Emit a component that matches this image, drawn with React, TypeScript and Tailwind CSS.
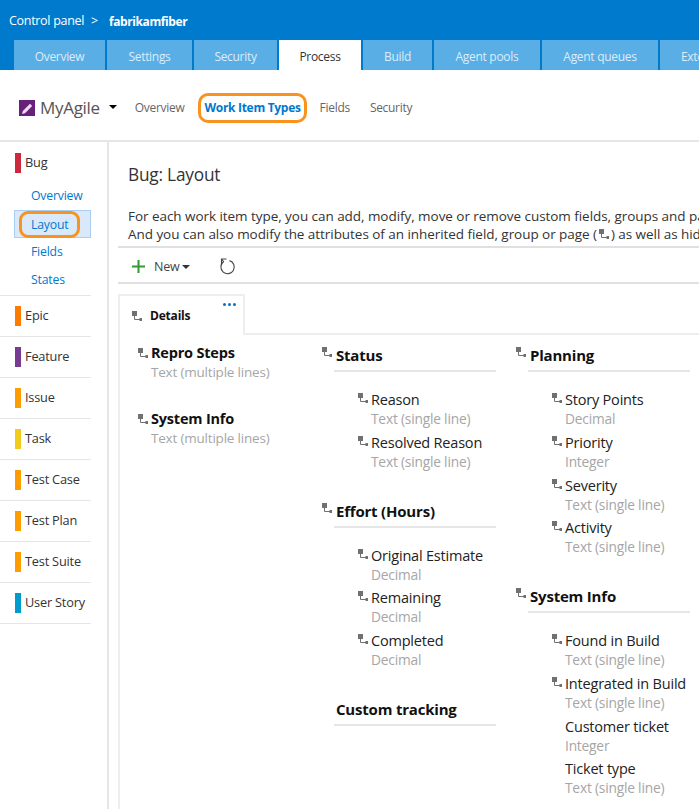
import React from 'react';

const topTabs = [
  { label: 'Overview', w: 'w-[91px]' },
  { label: 'Settings', w: 'w-[85px]' },
  { label: 'Security', w: 'w-[83px]' },
  { label: 'Process', w: 'w-[82px]', active: true },
  { label: 'Build', w: 'w-[69px]' },
  { label: 'Agent pools', w: 'w-[106px]' },
  { label: 'Agent queues', w: 'w-[116px]' },
];

const workItems = [
  { name: 'Epic', color: 'bg-[#ff7b00]' },
  { name: 'Feature', color: 'bg-[#773b93]' },
  { name: 'Issue', color: 'bg-[#ff9d00]' },
  { name: 'Task', color: 'bg-[#f2cb1d]' },
  { name: 'Test Case', color: 'bg-[#ff9d00]' },
  { name: 'Test Plan', color: 'bg-[#ff9d00]' },
  { name: 'Test Suite', color: 'bg-[#ff9d00]' },
  { name: 'User Story', color: 'bg-[#009ccc]' },
];

const InheritIcon = ({ className = '' }: { className?: string }) => (
  <svg width="10" height="10" viewBox="0 0 10 10" className={`shrink-0 ${className}`}>
    <rect x="0" y="0" width="5" height="5" fill="#707070" />
    <path d="M2.5 5v3.5H8" stroke="#707070" strokeWidth="1" fill="none" />
    <rect x="7.5" y="7" width="2.5" height="3" fill="#707070" />
  </svg>
);

const Field = ({ name, type, inherited = true }: { name: string; type: string; inherited?: boolean }) => (
  <div className="h-[42.75px] pl-[50px]">
    <div className="relative h-[20px] text-[14.5px] leading-[20px] text-[#222]">
      {inherited && <InheritIcon className="absolute left-[-13px] top-[3px]" />}
      {name}
    </div>
    <div className="mt-[-1px] text-[13.75px] leading-[20px] text-[#a6a6a6]">{type}</div>
  </div>
);

const Group = ({ title, inherited = true, children }: { title: string; inherited?: boolean; children?: React.ReactNode }) => (
  <div>
    <div className="relative ml-[13px] h-[28px] w-[162px] border-b-2 border-[#e6e6e6] pl-[2px] text-[15px] font-bold leading-[22px] text-[#111]">
      {inherited && <InheritIcon className="absolute left-[-12px] top-[3px]" />}
      {title}
    </div>
    {children && <div className="pt-[18px]">{children}</div>}
  </div>
);

export default function App() {
  return (
    <div className="h-[809px] w-[699px] overflow-hidden bg-white font-['Open_Sans','Noto_Sans',sans-serif] tracking-[-0.2px]">
      {/* top bar */}
      <div className="h-[70px] bg-[#007acc]">
        <div className="flex h-[40px] items-center pl-[9px] pt-[3px] text-[12.5px] tracking-[-0.3px] text-white">
          <span>Control panel</span>
          <span className="ml-[7px]">&gt;</span>
          <span className="ml-[11px] text-[12px] font-bold tracking-[-0.4px]">fabrikamfiber</span>
        </div>
        <div className="flex h-[30px] gap-[2px] pl-[14px]">
          {topTabs.map((t) => (
            <div
              key={t.label}
              className={`flex shrink-0 items-center justify-center pt-[4px] text-[12px] tracking-[-0.3px] ${t.w} ${
                t.active ? 'bg-white text-[#333]' : 'bg-[#59aee6] text-[#dcecf8]'
              }`}
            >
              {t.label}
            </div>
          ))}
          <div className="flex w-[60px] shrink-0 items-center bg-[#59aee6] pl-[21px] pt-[4px] text-[12px] tracking-[-0.3px] text-[#dcecf8]">Extensions</div>
        </div>
      </div>

      {/* process header */}
      <div className="flex h-[72px] items-center border-b-2 border-[#e6e6e6] pt-[6px] pl-[19px] text-[12px] tracking-[-0.3px]">
        <div className="flex h-[16px] w-[16px] items-center justify-center bg-[#68217a]">
          <svg width="13" height="13" viewBox="0 0 13 13">
            <path d="M1 12l.8-3L9 1.8l2.2 2.2L4 11.2z" fill="#eadff0" />
          </svg>
        </div>
        <span className="ml-[5px] text-[17px] text-[#555]">MyAgile</span>
        <span className="ml-[9px] mt-[-3px] h-0 w-0 border-x-[4px] border-t-[4px] border-x-transparent border-t-black" />
        <span className="ml-[18px] text-[#666]">Overview</span>
        <span className="ml-[14px] rounded-[10px] border-[3px] border-[#f7931e] px-[3px] py-[2px] font-bold leading-[20px] text-[#0078d0]">
          Work Item Types
        </span>
        <span className="ml-[13px] text-[#666]">Fields</span>
        <span className="ml-[20px] text-[#666]">Security</span>
      </div>

      <div className="flex">
        {/* left nav */}
        <div className="h-[668px] w-[109px] shrink-0 border-r-2 border-[#e6e6e6] pr-[16px]">
          <div className="border-b border-[#e6e6e6] pb-[1px] pl-[15px] pt-[11px]">
            <div className="flex h-[20px] items-center">
              <span className="h-[20px] w-[6px] bg-[#cc293d]" />
              <span className="ml-[4px] text-[12.75px] text-[#333]">Bug</span>
            </div>
            <div className="ml-[-1px] mt-[9px] flex flex-col text-[12.25px] text-[#0078d0]">
              <div className="flex h-[28px] items-center pl-[17px]">Overview</div>
              <div className="flex h-[28px] items-center border border-[#a8d0f5] bg-[#d9e9fa] pl-[4px]">
                <span className="rounded-[9px] border-[3px] border-[#f7931e] px-[9px] leading-[21px]">Layout</span>
              </div>
              <div className="flex h-[28px] items-center pl-[17px]">Fields</div>
              <div className="flex h-[28px] items-center pl-[17px]">States</div>
            </div>
          </div>
          {workItems.map((w) => (
            <div key={w.name} className="flex h-[41px] items-center border-b border-[#e6e6e6] pl-[15px]">
              <span className={`h-[20px] w-[6px] ${w.color}`} />
              <span className="ml-[4px] text-[12.75px] text-[#333]">{w.name}</span>
            </div>
          ))}
        </div>

        {/* main */}
        <div className="flex h-[668px] min-w-0 flex-1 flex-col pl-[9px]">
          <div className="whitespace-nowrap pb-[3px] pt-[20px]">
            <div className="pl-[10px] text-[17.25px] leading-[26px] text-[#333]">Bug: Layout</div>
            <div className="mt-[19px] pl-[10px] text-[13.5px] leading-[18px] tracking-[-0.05px] text-[#333]">
              <div>For each work item type, you can add, modify, move or remove custom fields, groups and pages.</div>
              <div className="flex items-center">
                And you can also modify the attributes of an inherited field, group or page (
                <InheritIcon className="mx-[2px]" />) as well as hide
              </div>
            </div>
          </div>

          <div className="flex h-[38px] items-center border-y-2 border-[#e0e0e0] pl-[14px] pt-[2px]">
            <svg width="13" height="13" viewBox="0 0 13 13">
              <path d="M6.5 0v13M0 6.5h13" stroke="#339933" strokeWidth="2" />
            </svg>
            <span className="ml-[9px] mt-[3px] text-[12.5px] text-[#444]">New</span>
            <span className="ml-[2px] mt-[1px] h-0 w-0 border-x-[4px] border-t-[4px] border-x-transparent border-t-[#333]" />
            <svg width="16" height="17" viewBox="0 0 16 17" className="ml-[30px]" fill="none" stroke="#444" strokeWidth="1.1">
              <path d="M2 1.5L3.5 3.7A6.7 6.7 0 1 0 9.5 2.6" />
              <path d="M1.5 6.5V1H6.5" />
            </svg>
          </div>

          {/* tabs and layout */}
          <div className="mt-[10px] flex-1 border-l-2 border-[#eee]">
            <div className="flex h-[41px] border-b-2 border-[#eee]">
              <div className="relative ml-[-2px] flex h-[41px] w-[127px] items-center border-x-2 border-t-2 border-[#eee] bg-white pl-[12px]">
                <InheritIcon />
                <span className="ml-[8px] text-[12px] font-bold text-[#111]">Details</span>
                <div className="absolute right-[7px] top-[7px] flex gap-[2px]">
                  <span className="h-[3px] w-[3px] rounded-full bg-[#106ebe]" />
                  <span className="h-[3px] w-[3px] rounded-full bg-[#106ebe]" />
                  <span className="h-[3px] w-[3px] rounded-full bg-[#106ebe]" />
                </div>
              </div>
            </div>

            <div className="flex">
              {/* col 1 */}
              <div className="w-[201px] shrink-0 pl-[18px] pt-[7px]">
                <div className="h-[66px]">
                  <div className="flex items-center gap-[3px] text-[14.5px] font-bold leading-[22px] text-[#111]">
                    <InheritIcon />Repro Steps
                  </div>
                  <div className="mt-[-1px] pl-[13px] text-[13.5px] leading-[19px] text-[#a6a6a6]">Text (multiple lines)</div>
                </div>
                <div>
                  <div className="flex items-center gap-[3px] text-[14.5px] font-bold leading-[22px] text-[#111]">
                    <InheritIcon />System Info
                  </div>
                  <div className="mt-[-1px] pl-[13px] text-[13.5px] leading-[19px] text-[#a6a6a6]">Text (multiple lines)</div>
                </div>
              </div>

              {/* col 2 */}
              <div className="w-[194px] shrink-0 pt-[9px]">
                <Group title="Status">
                  <Field name="Reason" type="Text (single line)" />
                  <Field name="Resolved Reason" type="Text (single line)" />
                </Group>
                <div className="mt-[24px]">
                  <Group title="Effort (Hours)">
                    <Field name="Original Estimate" type="Decimal" />
                    <Field name="Remaining" type="Decimal" />
                    <Field name="Completed" type="Decimal" />
                  </Group>
                </div>
                <div className="mt-[24px]">
                  <Group title="Custom tracking" inherited={false} />
                </div>
              </div>

              {/* col 3 */}
              <div className="w-[190px] shrink-0 pt-[9px]">
                <Group title="Planning">
                  <Field name="Story Points" type="Decimal" />
                  <Field name="Priority" type="Integer" />
                  <Field name="Severity" type="Text (single line)" />
                  <Field name="Activity" type="Text (single line)" />
                </Group>
                <div className="mt-[24px]">
                  <Group title="System Info">
                    <Field name="Found in Build" type="Text (single line)" />
                    <Field name="Integrated in Build" type="Text (single line)" />
                    <Field name="Customer ticket" type="Integer" inherited={false} />
                    <Field name="Ticket type" type="Text (single line)" inherited={false} />
                  </Group>
                </div>
              </div>
            </div>
          </div>
        </div>
      </div>
    </div>
  );
}
